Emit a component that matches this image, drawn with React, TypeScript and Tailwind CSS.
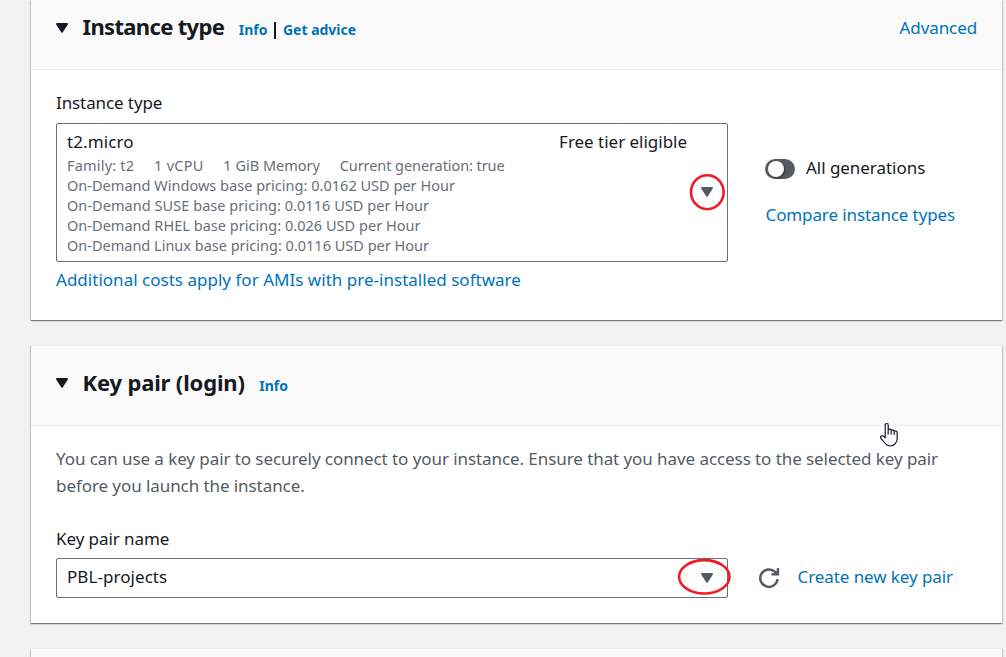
import React from "react";

const cardShadow =
  "border-t border-[#eaeded] shadow-[0_1px_1px_0_rgba(0,28,36,0.38),1px_1px_1px_0_rgba(0,28,36,0.15),-1px_1px_1px_0_rgba(0,28,36,0.15)]";

function Caret({ className }: { className: string }) {
  return (
    <svg width="14" height="12" viewBox="0 0 14 12" className={className}>
      <path
        d="M2 2 L12 2 L7 9.6 Z"
        fill="currentColor"
        stroke="currentColor"
        strokeWidth="2"
        strokeLinejoin="round"
      />
    </svg>
  );
}

function RefreshIcon() {
  return (
    <svg width="22" height="22" viewBox="0 0 22 22" fill="none" className="shrink-0 text-[#545b64]">
      <path d="M19.6 12.2 A8.7 8.7 0 1 1 16.8 4.7 L18.5 6.5" stroke="currentColor" strokeWidth="2.5" />
      <path d="M20 1 V7.4 H13.4" stroke="currentColor" strokeWidth="2.3" />
      <path d="M19.5 3 V7.5 H15 Z" fill="currentColor" />
    </svg>
  );
}

function HandCursor() {
  return (
    <svg width="20" height="26" viewBox="0 0 20 26" className="absolute left-[879px] top-[422px]">
      <path
        d="M6.2 15.8 V3.2 Q6.2 1.5 7.7 1.5 Q9.2 1.5 9.2 3.2 V7.4 Q11.3 6.6 12.2 8 Q14.3 7.4 15.2 8.9 Q18.2 8.6 18.2 11.2 V16.5 Q18.2 19.5 16.4 21.3 Q14.5 24 11.4 24 Q8 24 6 21.2 L1.8 16.4 Q1 14.6 2.4 13.9 Q3.7 13.4 4.9 14.5 Z"
        fill="#fff"
        stroke="#14142b"
        strokeWidth="1.2"
        strokeLinejoin="round"
      />
      <path d="M9.2 7.4 V12.5 M12.2 8 V12.5 M15.2 9 V13" stroke="#14142b" strokeWidth="1.2" />
    </svg>
  );
}

const prices = [
  { text: "On-Demand Windows base pricing: 0.0162 USD per Hour", cls: "tracking-[0.02px]" },
  { text: "On-Demand SUSE base pricing: 0.0116 USD per Hour", cls: "tracking-[0.05px]" },
  { text: "On-Demand RHEL base pricing: 0.026 USD per Hour", cls: "tracking-[0.03px]" },
  { text: "On-Demand Linux base pricing: 0.0116 USD per Hour", cls: "tracking-[0px]" },
];

export default function App() {
  return (
    <div className="relative h-[657px] w-[1006px] overflow-hidden whitespace-nowrap bg-[#f1f3f3] pl-[31px] font-['Noto_Sans',sans-serif] text-[17px] leading-[27px] text-[#16191f]">
      <div className="flex w-[971px] flex-col gap-[25px]">
        <section className={`h-[320px] bg-white ${cardShadow}`}>
          <header className="-mt-px flex h-[70px] items-start border-b border-[#eaeded] bg-[#fafafa] pl-6 pr-[25px] pt-[9px]">
            <Caret className="mt-[13px]" />
            <div className="ml-[13.5px] flex items-baseline leading-[34px]">
              <h2 className="text-[22px] font-bold tracking-[-0.66px]">Instance type</h2>
              <a className="ml-[14.5px] text-[14px] font-bold text-[#0073bb]">Info</a>
              <span className="ml-[7px] mr-[7px] h-[17px] w-[1.5px] translate-y-[2px] self-center bg-[#16191f]" />
              <a className="text-[14px] font-bold text-[#0073bb]">Get advice</a>
            </div>
            <a className="ml-auto mt-[5px] tracking-[-0.1px] text-[#0073bb]">Advanced</a>
          </header>
          <div className="flex px-[25px] pt-[19px]">
            <div className="w-[672px]">
              <div className="tracking-[-0.1px]">Instance type</div>
              <div className="mt-[7px] flex h-[139px] items-center justify-between rounded-[2px] border border-[#687078] pl-[10px] pr-[13px]">
                <div className="w-[620px] self-start pt-1">
                  <div className="flex justify-between">
                    <span className="tracking-[0.1px]">t2.micro</span>
                    <span className="tracking-[-0.02px]">Free tier eligible</span>
                  </div>
                  <div className="text-[14.5px] leading-5 text-[#687078]">
                    <div className="flex gap-[19.8px]">
                      <span className="tracking-[0.2px]">Family: t2</span>
                      <span className="tracking-[0.25px]">1 vCPU</span>
                      <span>1 GiB Memory</span>
                      <span className="tracking-[-0.08px]">Current generation: true</span>
                    </div>
                    {prices.map((p) => (
                      <div key={p.text} className={p.cls}>
                        {p.text}
                      </div>
                    ))}
                  </div>
                </div>
                <Caret className="mb-px text-[#545b64]" />
              </div>
              <a className="mt-1 block tracking-[0.02px] text-[#0073bb]">
                Additional costs apply for AMIs with pre-installed software
              </a>
            </div>
            <div className="ml-[37px] mt-[65px] flex flex-col gap-5">
              <div className="flex items-center">
                <div className="mt-[3px] flex h-5 w-[30px] items-center rounded-full bg-[#545b64] pl-[2.5px]">
                  <div className="size-4 rounded-full bg-white shadow-[1px_1px_2px_rgba(0,0,0,0.5)]" />
                </div>
                <span className="ml-[11px] tracking-[-0.04px]">All generations</span>
              </div>
              <a className="ml-[0.5px] tracking-[-0.11px] text-[#0073bb]">Compare instance types</a>
            </div>
          </div>
        </section>

        <section className={`h-[278px] bg-white ${cardShadow}`}>
          <header className="flex h-[80px] items-start border-b border-[#eaeded] bg-[#fafafa] pl-6 pt-[19px]">
            <Caret className="mt-[12px]" />
            <div className="ml-[13.5px] flex items-baseline leading-[34px]">
              <h2 className="text-[22px] font-bold tracking-[-0.16px]">Key pair (login)</h2>
              <a className="ml-[14.5px] text-[14px] font-bold text-[#0073bb]">Info</a>
            </div>
          </header>
          <div className="px-[25px] pt-[19px]">
            <p className="tracking-[-0.074px] text-[#545b64]">
              You can use a key pair to securely connect to your instance. Ensure that you have access to the selected key pair
              <br />
              before you launch the instance.
            </p>
            <div className="mt-[26px] tracking-[-0.07px]">Key pair name</div>
            <div className="mt-[6px] flex">
              <div className="flex h-10 w-[672px] items-center justify-between rounded-[2px] border border-[#687078] pl-[10px] pr-[13px]">
                <span className="self-start pt-1 tracking-[0.06px]">PBL-projects</span>
                <Caret className="text-[#545b64]" />
              </div>
              <div className="ml-[30px] flex items-center">
                <RefreshIcon />
                <a className="mb-[3px] ml-[17.5px] tracking-[-0.08px] text-[#0073bb]">Create new key pair</a>
              </div>
            </div>
          </div>
        </section>

        <section className={`h-20 bg-[#fafafa] ${cardShadow}`} />
      </div>

      <svg width="60" height="50" viewBox="0 0 60 50" fill="none" className="absolute left-[677px] top-[167px]">
        <ellipse cx="30.3" cy="25.2" rx="16.3" ry="17" stroke="#ed1c24" strokeWidth="2.6" />
      </svg>
      <svg width="60" height="50" viewBox="0 0 60 50" fill="none" className="absolute left-[674px] top-[552px]">
        <ellipse cx="30.3" cy="24.8" rx="25.2" ry="16.7" stroke="#ed1c24" strokeWidth="2.6" />
      </svg>
      <HandCursor />
    </div>
  );
}
